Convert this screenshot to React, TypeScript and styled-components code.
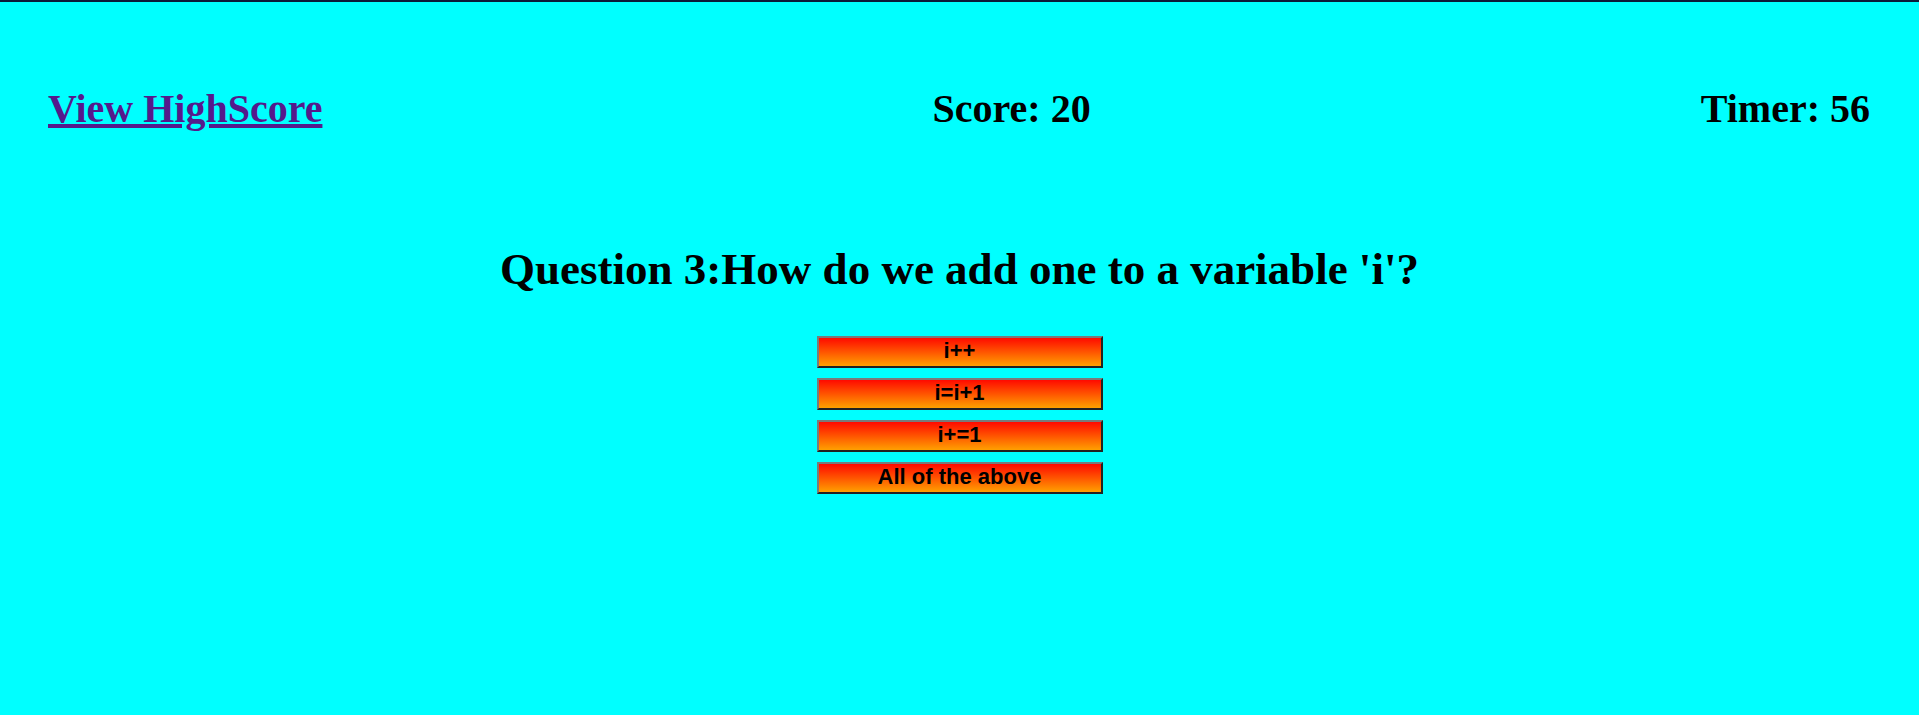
import React from 'react';
import styled, { createGlobalStyle } from 'styled-components';

const GlobalStyle = createGlobalStyle`
  html, body {
    margin: 0;
    padding: 0;
    background: #00ffff;
  }
  body {
    font-family: "Liberation Serif", "Times New Roman", serif;
    border-top: 2px solid #0b1a3a;
    min-height: 713px;
  }
`;

const Header = styled.header`
  display: flex;
  justify-content: space-between;
  align-items: baseline;
  padding: 83px 49px 0 48px;
`;

const HighScoreLink = styled.a`
  font-size: 40px;
  font-weight: bold;
  color: #551a8b;
  text-decoration: underline;
`;

const Stat = styled.h2`
  margin: 0;
  font-size: 40px;
  font-weight: bold;
  color: #000;
`;

const QuizBox = styled.main`
  display: flex;
  flex-direction: column;
  align-items: center;
  padding-top: 111px;
`;

const Question = styled.h1`
  margin: 0 0 41px;
  font-size: 45px;
  font-weight: bold;
  text-align: center;
`;

const Choices = styled.div`
  display: flex;
  flex-direction: column;
  gap: 10px;
`;

const ChoiceButton = styled.button`
  width: 286px;
  height: 32px;
  padding: 0 0 2px;
  border: 2px solid;
  border-color: #7a7a7a #222 #222 #7a7a7a;
  background: linear-gradient(to bottom, #ff0a00, #ffa000);
  font-family: "Liberation Sans", Arial, sans-serif;
  font-size: 22px;
  font-weight: bold;
  color: #000;
  cursor: pointer;
`;

const choices = ['i++', 'i=i+1', 'i+=1', 'All of the above'];

export default function App() {
  return (
    <>
      <GlobalStyle />
      <Header>
        <HighScoreLink href="#">View HighScore</HighScoreLink>
        <Stat>Score: 20</Stat>
        <Stat>Timer: 56</Stat>
      </Header>
      <QuizBox>
        <Question>Question 3:How do we add one to a variable 'i'?</Question>
        <Choices>
          {choices.map(choice => (
            <ChoiceButton key={choice}>{choice}</ChoiceButton>
          ))}
        </Choices>
      </QuizBox>
    </>
  );
}
